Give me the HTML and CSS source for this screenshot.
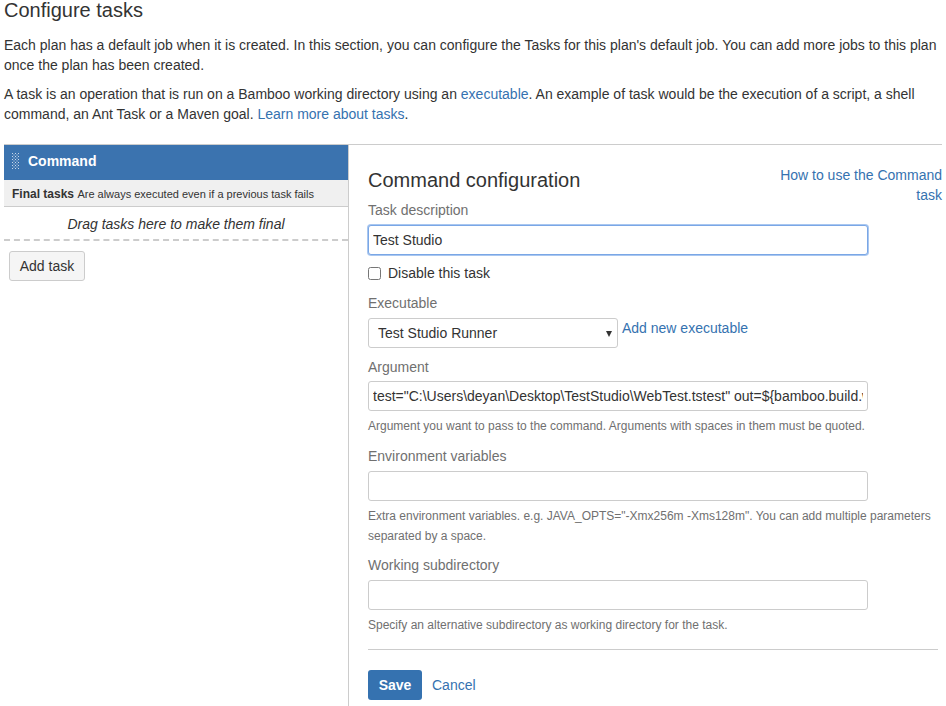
FILE: index.html
```html
<!DOCTYPE html>
<html>
<head>
<meta charset="utf-8">
<link rel="stylesheet" href="styles.css">
</head>
<body>
<div class="page">
  <h1 class="title">Configure tasks</h1>
  <p class="intro intro-first">Each plan has a default job when it is created. In this section, you can configure the Tasks for this plan's default job. You can add more jobs to this plan once the plan has been created.</p>
  <p class="intro intro-second">A task is an operation that is run on a Bamboo working directory using an <a href="#">executable</a>. An example of task would be the execution of a script, a shell command, an Ant Task or a Maven goal. <a href="#">Learn more about tasks</a>.</p>

  <div class="layout">
    <div class="sidebar">
      <div class="task-header">
        <svg class="grip" width="8" height="16" viewBox="0 0 8 16">
          <g fill="#c9d7e8">
            <rect x="0" y="0" width="1" height="1"/><rect x="3" y="0" width="1" height="1"/><rect x="6" y="0" width="1" height="1"/>
            <rect x="1.5" y="1.5" width="1" height="1"/><rect x="4.5" y="1.5" width="1" height="1"/>
            <rect x="0" y="3" width="1" height="1"/><rect x="3" y="3" width="1" height="1"/><rect x="6" y="3" width="1" height="1"/>
            <rect x="1.5" y="4.5" width="1" height="1"/><rect x="4.5" y="4.5" width="1" height="1"/>
            <rect x="0" y="6" width="1" height="1"/><rect x="3" y="6" width="1" height="1"/><rect x="6" y="6" width="1" height="1"/>
            <rect x="1.5" y="7.5" width="1" height="1"/><rect x="4.5" y="7.5" width="1" height="1"/>
            <rect x="0" y="9" width="1" height="1"/><rect x="3" y="9" width="1" height="1"/><rect x="6" y="9" width="1" height="1"/>
            <rect x="1.5" y="10.5" width="1" height="1"/><rect x="4.5" y="10.5" width="1" height="1"/>
            <rect x="0" y="12" width="1" height="1"/><rect x="3" y="12" width="1" height="1"/><rect x="6" y="12" width="1" height="1"/>
            <rect x="1.5" y="13.5" width="1" height="1"/><rect x="4.5" y="13.5" width="1" height="1"/>
            <rect x="0" y="15" width="1" height="1"/><rect x="3" y="15" width="1" height="1"/><rect x="6" y="15" width="1" height="1"/>
          </g>
        </svg>
        <span class="task-name">Command</span>
      </div>
      <div class="final-row"><strong>Final tasks</strong> <span class="final-note">Are always executed even if a previous task fails</span></div>
      <div class="drop-zone">Drag tasks here to make them final</div>
      <button class="btn-add" type="button">Add task</button>
    </div>

    <div class="panel">
      <div class="panel-head">
        <h2 class="panel-title">Command configuration</h2>
        <a class="help-link" href="#">How to use the Command task</a>
      </div>

      <label class="field-label label-first">Task description</label>
      <input class="text-input focused" type="text" value="Test Studio">

      <div class="check-row">
        <input type="checkbox" class="check" id="dis">
        <label for="dis" class="check-label">Disable this task</label>
      </div>

      <label class="field-label label-gap">Executable</label>
      <div class="select-row">
        <span class="select-wrap">
          <select class="select"><option>Test Studio Runner</option></select>
        </span>
        <a class="add-exec" href="#">Add new executable</a>
      </div>

      <label class="field-label label-gap2">Argument</label>
      <input class="text-input arg-input" type="text" value="test=&quot;C:\Users\deyan\Desktop\TestStudio\WebTest.tstest&quot; out=${bamboo.build.working.directory}">
      <div class="help">Argument you want to pass to the command. Arguments with spaces in them must be quoted.</div>

      <label class="field-label label-gap">Environment variables</label>
      <input class="text-input" type="text">
      <div class="help">Extra environment variables. e.g. JAVA_OPTS="-Xmx256m -Xms128m". You can add multiple parameters separated by a space.</div>

      <label class="field-label label-gap2">Working subdirectory</label>
      <input class="text-input" type="text">
      <div class="help">Specify an alternative subdirectory as working directory for the task.</div>

      <div class="actions">
        <button class="btn-save" type="button">Save</button>
        <a class="cancel" href="#">Cancel</a>
      </div>
    </div>
  </div>
</div>
</body>
</html>
```

FILE: styles.css
```css
* { box-sizing: border-box; }
html, body {
  margin: 0;
  padding: 0;
  background: #fff;
}
body {
  font-family: "Liberation Sans", Arial, sans-serif;
  font-size: 14px;
  line-height: 20px;
  color: #333;
  overflow: hidden;
}
a { color: #3572b0; text-decoration: none; }

.page {
  padding: 0 4px;
  height: 706px;
  display: flex;
  flex-direction: column;
}
.title {
  margin: 0;
  font-size: 20px;
  font-weight: normal;
  line-height: 20px;
  color: #333;
}
.intro {
  margin: 0;
}
.intro-first { margin-top: 15px; }
.intro-second { margin-top: 9px; }

.layout {
  margin-top: 20px;
  border-top: 1px solid #ccc;
  display: flex;
  flex: 1;
}
.sidebar {
  width: 344px;
  flex: none;
}
.task-header {
  background: #3b73af;
  height: 35px;
  display: flex;
  align-items: center;
  padding: 0 0 4px 8px;
  color: #fff;
}
.grip { margin-right: 8px; margin-top: 1px; }
.task-name {
  font-weight: bold;
  font-size: 14px;
}
.final-row {
  background: #f0f0f0;
  height: 27px;
  border-bottom: 1px solid #ccc;
  font-size: 12px;
  line-height: 29px;
  padding-left: 8px;
  color: #333;
}
.final-row strong { font-weight: bold; }
.final-note { font-size: 11px; }
.drop-zone {
  height: 34px;
  border-bottom: 2px dashed #ccc;
  text-align: center;
  font-style: italic;
  font-size: 14px;
  line-height: 35px;
  color: #333;
}
.btn-add {
  margin: 10px 0 0 5px;
  height: 30px;
  width: 76px;
  font-family: inherit;
  font-size: 14px;
  color: #333;
  background: #f5f5f5;
  border: 1px solid #ccc;
  border-radius: 3px;
  padding: 0;
}

.panel {
  flex: 1;
  border-left: 1px solid #ccc;
  padding: 20px 0 0 19px;
}
.panel-head {
  display: flex;
  justify-content: space-between;
  align-items: flex-start;
}
.panel-title {
  margin: 3px 0 0 0;
  font-size: 20px;
  font-weight: normal;
  line-height: 24px;
  color: #333;
}
.help-link {
  width: 166px;
  text-align: right;
  line-height: 20px;
}
.field-label {
  display: block;
  color: #707070;
  line-height: 20px;
}
.label-first { margin-top: -5px; }
.label-gap { margin-top: 10px; }
.label-gap2 { margin-top: 9px; }

.text-input {
  display: block;
  width: 500px;
  height: 30px;
  margin-top: 5px;
  border: 1px solid #ccc;
  border-radius: 3px;
  padding: 0 4px;
  font-family: inherit;
  font-size: 14px;
  color: #333;
  background: #fff;
  outline: none;
}
.text-input.focused {
  border-color: #7aa7e6;
  box-shadow: 0 0 0 1px #a9c7f0;
}
.arg-input { margin-top: 4px; }

.check-row {
  margin-top: 8px;
  display: flex;
  align-items: center;
  height: 20px;
}
.check {
  margin: 0 7px 0 0;
  width: 13px;
  height: 13px;
}
.check-label { color: #333; }

.select-row {
  margin-top: 5px;
  display: flex;
  align-items: flex-start;
}
.select-wrap {
  position: relative;
  display: inline-block;
  width: 250px;
  height: 30px;
}
.select-wrap::after {
  content: "";
  position: absolute;
  right: 6px;
  top: 13px;
  border-left: 3.5px solid transparent;
  border-right: 3.5px solid transparent;
  border-top: 6px solid #333;
  pointer-events: none;
}
.select {
  -webkit-appearance: none;
  appearance: none;
  width: 250px;
  height: 30px;
  border: 1px solid #ccc;
  border-radius: 3px;
  background: #fff;
  padding: 0 0 0 9px;
  font-family: inherit;
  font-size: 14px;
  color: #333;
}
.add-exec {
  margin-left: 4px;
  line-height: 20px;
}

.help {
  margin-top: 5px;
  font-size: 12px;
  line-height: 20px;
  color: #707070;
  width: 574px;
}

.actions {
  margin-top: 14px;
  margin-right: 4px;
  border-top: 1px solid #ccc;
  padding-top: 20px;
  display: flex;
  align-items: center;
}
.btn-save {
  height: 30px;
  width: 54px;
  background: #3572b0;
  color: #fff;
  font-family: inherit;
  font-weight: bold;
  font-size: 14px;
  border: none;
  border-radius: 3px;
  padding: 0;
}
.cancel {
  margin-left: 10px;
}
```
